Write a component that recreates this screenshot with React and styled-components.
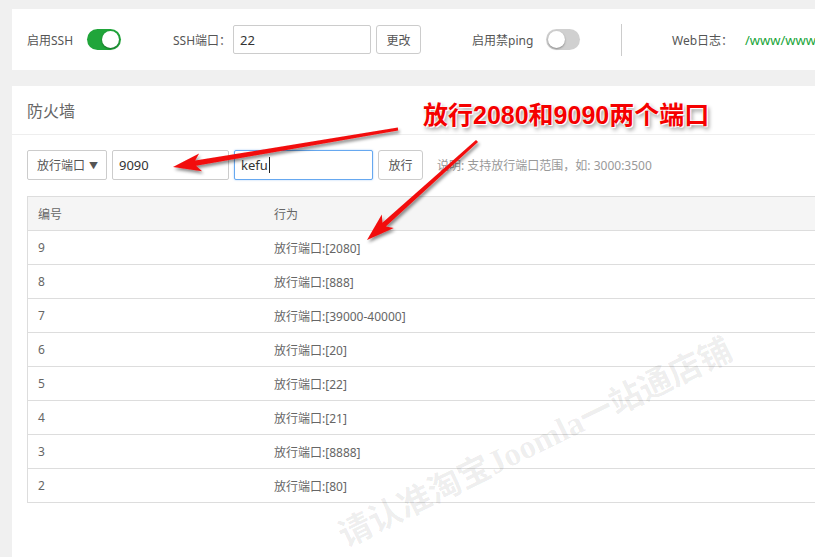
import React from "react";
import styled, { createGlobalStyle } from "styled-components";

const GlobalStyle = createGlobalStyle`
  html, body {
    margin: 0;
    padding: 0;
    background: #f0f0f0;
    overflow: hidden;
  }
  body {
    font-family: "Noto Sans", "Noto Sans CJK SC", sans-serif;
    font-size: 12px;
    color: #666;
  }
`;

const Stage = styled.div`
  position: relative;
  width: 1100px;
  height: 557px;
  padding: 9px 0 0 12px;
  box-sizing: border-box;
  display: flex;
  flex-direction: column;
  gap: 16px;
`;

const Panel = styled.div`
  background: #fff;
  flex: ${(p) => (p.$grow ? 1 : "none")};
`;

const TopBar = styled(Panel)`
  height: 61px;
  display: flex;
  align-items: center;
  padding-left: 15px;
`;

const Label = styled.span`
  width: ${(p) => p.$w}px;
  margin-left: ${(p) => p.$ml || 0}px;
  flex: none;
  white-space: nowrap;
  color: #555;
`;

const Toggle = styled.span`
  position: relative;
  width: 34px;
  height: 21px;
  border-radius: 11px;
  background: ${(p) => (p.$on ? "#20a53a" : "#d0d0d0")};
  flex: none;
  margin-left: ${(p) => p.$ml || 0}px;

  &::after {
    content: "";
    position: absolute;
    top: 2px;
    left: ${(p) => (p.$on ? "15px" : "2px")};
    width: 17px;
    height: 17px;
    border-radius: 50%;
    background: #fff;
    box-shadow: 0 1px 2px rgba(0, 0, 0, 0.35);
  }
`;

const Input = styled.div`
  width: ${(p) => p.$w}px;
  height: ${(p) => p.$h || 29}px;
  margin-left: ${(p) => p.$ml || 0}px;
  box-sizing: border-box;
  border: 1px solid ${(p) => (p.$focus ? "#66a8f0" : "#ccc")};
  box-shadow: ${(p) => (p.$focus ? "0 0 2px rgba(102,168,240,.6)" : "none")};
  border-radius: 2px;
  padding-left: 6px;
  display: flex;
  align-items: center;
  font-size: 13px;
  color: #333;
  flex: none;
  background: #fff;
`;

const Caret = styled.span`
  display: inline-block;
  width: 1px;
  height: 16px;
  background: #222;
  margin-left: 1px;
`;

const Button = styled.div`
  width: ${(p) => p.$w}px;
  height: ${(p) => p.$h || 29}px;
  margin-left: ${(p) => p.$ml || 0}px;
  box-sizing: border-box;
  border: 1px solid #ccc;
  border-radius: 3px;
  display: flex;
  align-items: center;
  justify-content: center;
  font-size: 12px;
  color: #555;
  flex: none;
  background: #fff;
`;

const Divider = styled.span`
  width: 1px;
  height: 32px;
  background: #ccc;
  margin-left: 41px;
  flex: none;
`;

const Path = styled.span`
  color: #20a53a;
  font-size: 13px;
  white-space: nowrap;
`;

const Header = styled.div`
  height: 48px;
  border-bottom: 1px solid #eee;
  padding-left: 15px;
  display: flex;
  align-items: center;
  font-size: 16px;
  color: #666;
`;

const Body = styled.div`
  padding: 15px 0 0 15px;
`;

const FormRow = styled.div`
  display: flex;
  align-items: center;
  height: 30px;
`;

const Select = styled(Input)`
  justify-content: space-between;
  padding: 0 8px 0 9px;
  font-size: 12px;
  color: #555;
  &::after {
    content: "▼";
    font-size: 9px;
    color: #555;
  }
`;

const Help = styled.span`
  margin-left: 14px;
  color: #999;
  font-size: 12px;
  white-space: nowrap;
`;

const Table = styled.div`
  margin-top: 16px;
  width: 1100px;
  border-left: 1px solid #ddd;
`;

const Row = styled.div`
  display: grid;
  grid-template-columns: 236px 1fr;
  height: 33px;
  border-bottom: 1px solid #ddd;
  border-top: ${(p) => (p.$head ? "1px solid #ddd" : "none")};
  background: ${(p) => (p.$head ? "#f5f5f5" : "#fff")};
  align-items: center;
  color: #666;
  font-size: 12px;

  span {
    padding-left: 10px;
  }
`;

const Overlay = styled.svg`
  position: absolute;
  left: 0;
  top: 0;
  width: 815px;
  height: 557px;
  pointer-events: none;
  overflow: visible;
`;

const Note = styled.div`
  position: absolute;
  left: 423px;
  top: 95px;
  font-family: "Liberation Sans", "Noto Sans CJK SC", sans-serif;
  font-weight: 700;
  font-size: 25px;
  color: #f50000;
  white-space: nowrap;
  text-shadow: 0 0 2px #fff, 0 0 2px #fff, 1px 1px 0 #fff, 2px 3px 4px rgba(0, 0, 0, 0.45);
`;

const Watermark = styled.div`
  position: absolute;
  left: 534px;
  top: 440px;
  transform: translate(-50%, -50%) rotate(-26deg);
  font-family: "Liberation Serif", "Noto Sans CJK SC", serif;
  font-weight: 700;
  font-size: 33px;
  color: rgba(0, 0, 0, 0.075);
  white-space: nowrap;
  pointer-events: none;
`;

const rules = [
  ["9", "放行端口:[2080]"],
  ["8", "放行端口:[888]"],
  ["7", "放行端口:[39000-40000]"],
  ["6", "放行端口:[20]"],
  ["5", "放行端口:[22]"],
  ["4", "放行端口:[21]"],
  ["3", "放行端口:[8888]"],
  ["2", "放行端口:[80]"],
];

function arrow(x1, y1, x2, y2) {
  const dx = x2 - x1;
  const dy = y2 - y1;
  const len = Math.hypot(dx, dy);
  const ux = dx / len;
  const uy = dy / len;
  const nx = -uy;
  const ny = ux;
  const headL = 28;
  const headW = 9;
  const back = 5;
  const s0 = 1.5;
  const s1 = 2.6;
  const neckX = x2 - ux * headL;
  const neckY = y2 - uy * headL;
  const innerX = x2 - ux * (headL - back);
  const innerY = y2 - uy * (headL - back);
  const pts = [
    [x1 + nx * s0, y1 + ny * s0],
    [innerX + nx * s1, innerY + ny * s1],
    [neckX + nx * headW, neckY + ny * headW],
    [x2, y2],
    [neckX - nx * headW, neckY - ny * headW],
    [innerX - nx * s1, innerY - ny * s1],
    [x1 - nx * s0, y1 - ny * s0],
  ];
  return pts.map((p) => p.map((v) => v.toFixed(1)).join(",")).join(" ");
}

const Arrows = () => (
  <Overlay viewBox="0 0 815 557">
    <defs>
      <filter id="shadow" x="-20%" y="-20%" width="140%" height="140%">
        <feDropShadow dx="1.5" dy="2.5" stdDeviation="1.8" floodColor="#000" floodOpacity="0.45" />
      </filter>
    </defs>
    <g filter="url(#shadow)" fill="#f20d0d">
      <polygon points={arrow(398, 129, 173, 167)} />
      <polygon points={arrow(477, 141, 367, 240)} />
    </g>
  </Overlay>
);

export default function App() {
  return (
    <>
      <GlobalStyle />
      <Stage>
        <TopBar>
          <Label $w={60}>启用SSH</Label>
          <Toggle $on />
          <Label $w={60} $ml={52}>SSH端口：</Label>
          <Input $w={138}>22</Input>
          <Button $w={45} $ml={5}>更改</Button>
          <Label $w={74} $ml={51}>启用禁ping</Label>
          <Toggle />
          <Divider />
          <Label $w={73} $ml={50}>Web日志：</Label>
          <Path>/www/wwwlogs</Path>
        </TopBar>
        <Panel $grow>
          <Header>防火墙</Header>
          <Body>
            <FormRow>
              <Select $w={80} $h={30}>放行端口</Select>
              <Input $w={117} $h={30} $ml={5}>9090</Input>
              <Input $w={139} $h={30} $ml={5} $focus>
                kefu<Caret />
              </Input>
              <Button $w={45} $h={30} $ml={5}>放行</Button>
              <Help>说明: 支持放行端口范围，如: 3000:3500</Help>
            </FormRow>
            <Table>
              <Row $head>
                <span>编号</span>
                <span>行为</span>
              </Row>
              {rules.map(([id, act]) => (
                <Row key={id}>
                  <span>{id}</span>
                  <span>{act}</span>
                </Row>
              ))}
            </Table>
          </Body>
        </Panel>
        <Watermark>请认准淘宝Joomla一站通店铺</Watermark>
        <Arrows />
        <Note>放行2080和9090两个端口</Note>
      </Stage>
    </>
  );
}
